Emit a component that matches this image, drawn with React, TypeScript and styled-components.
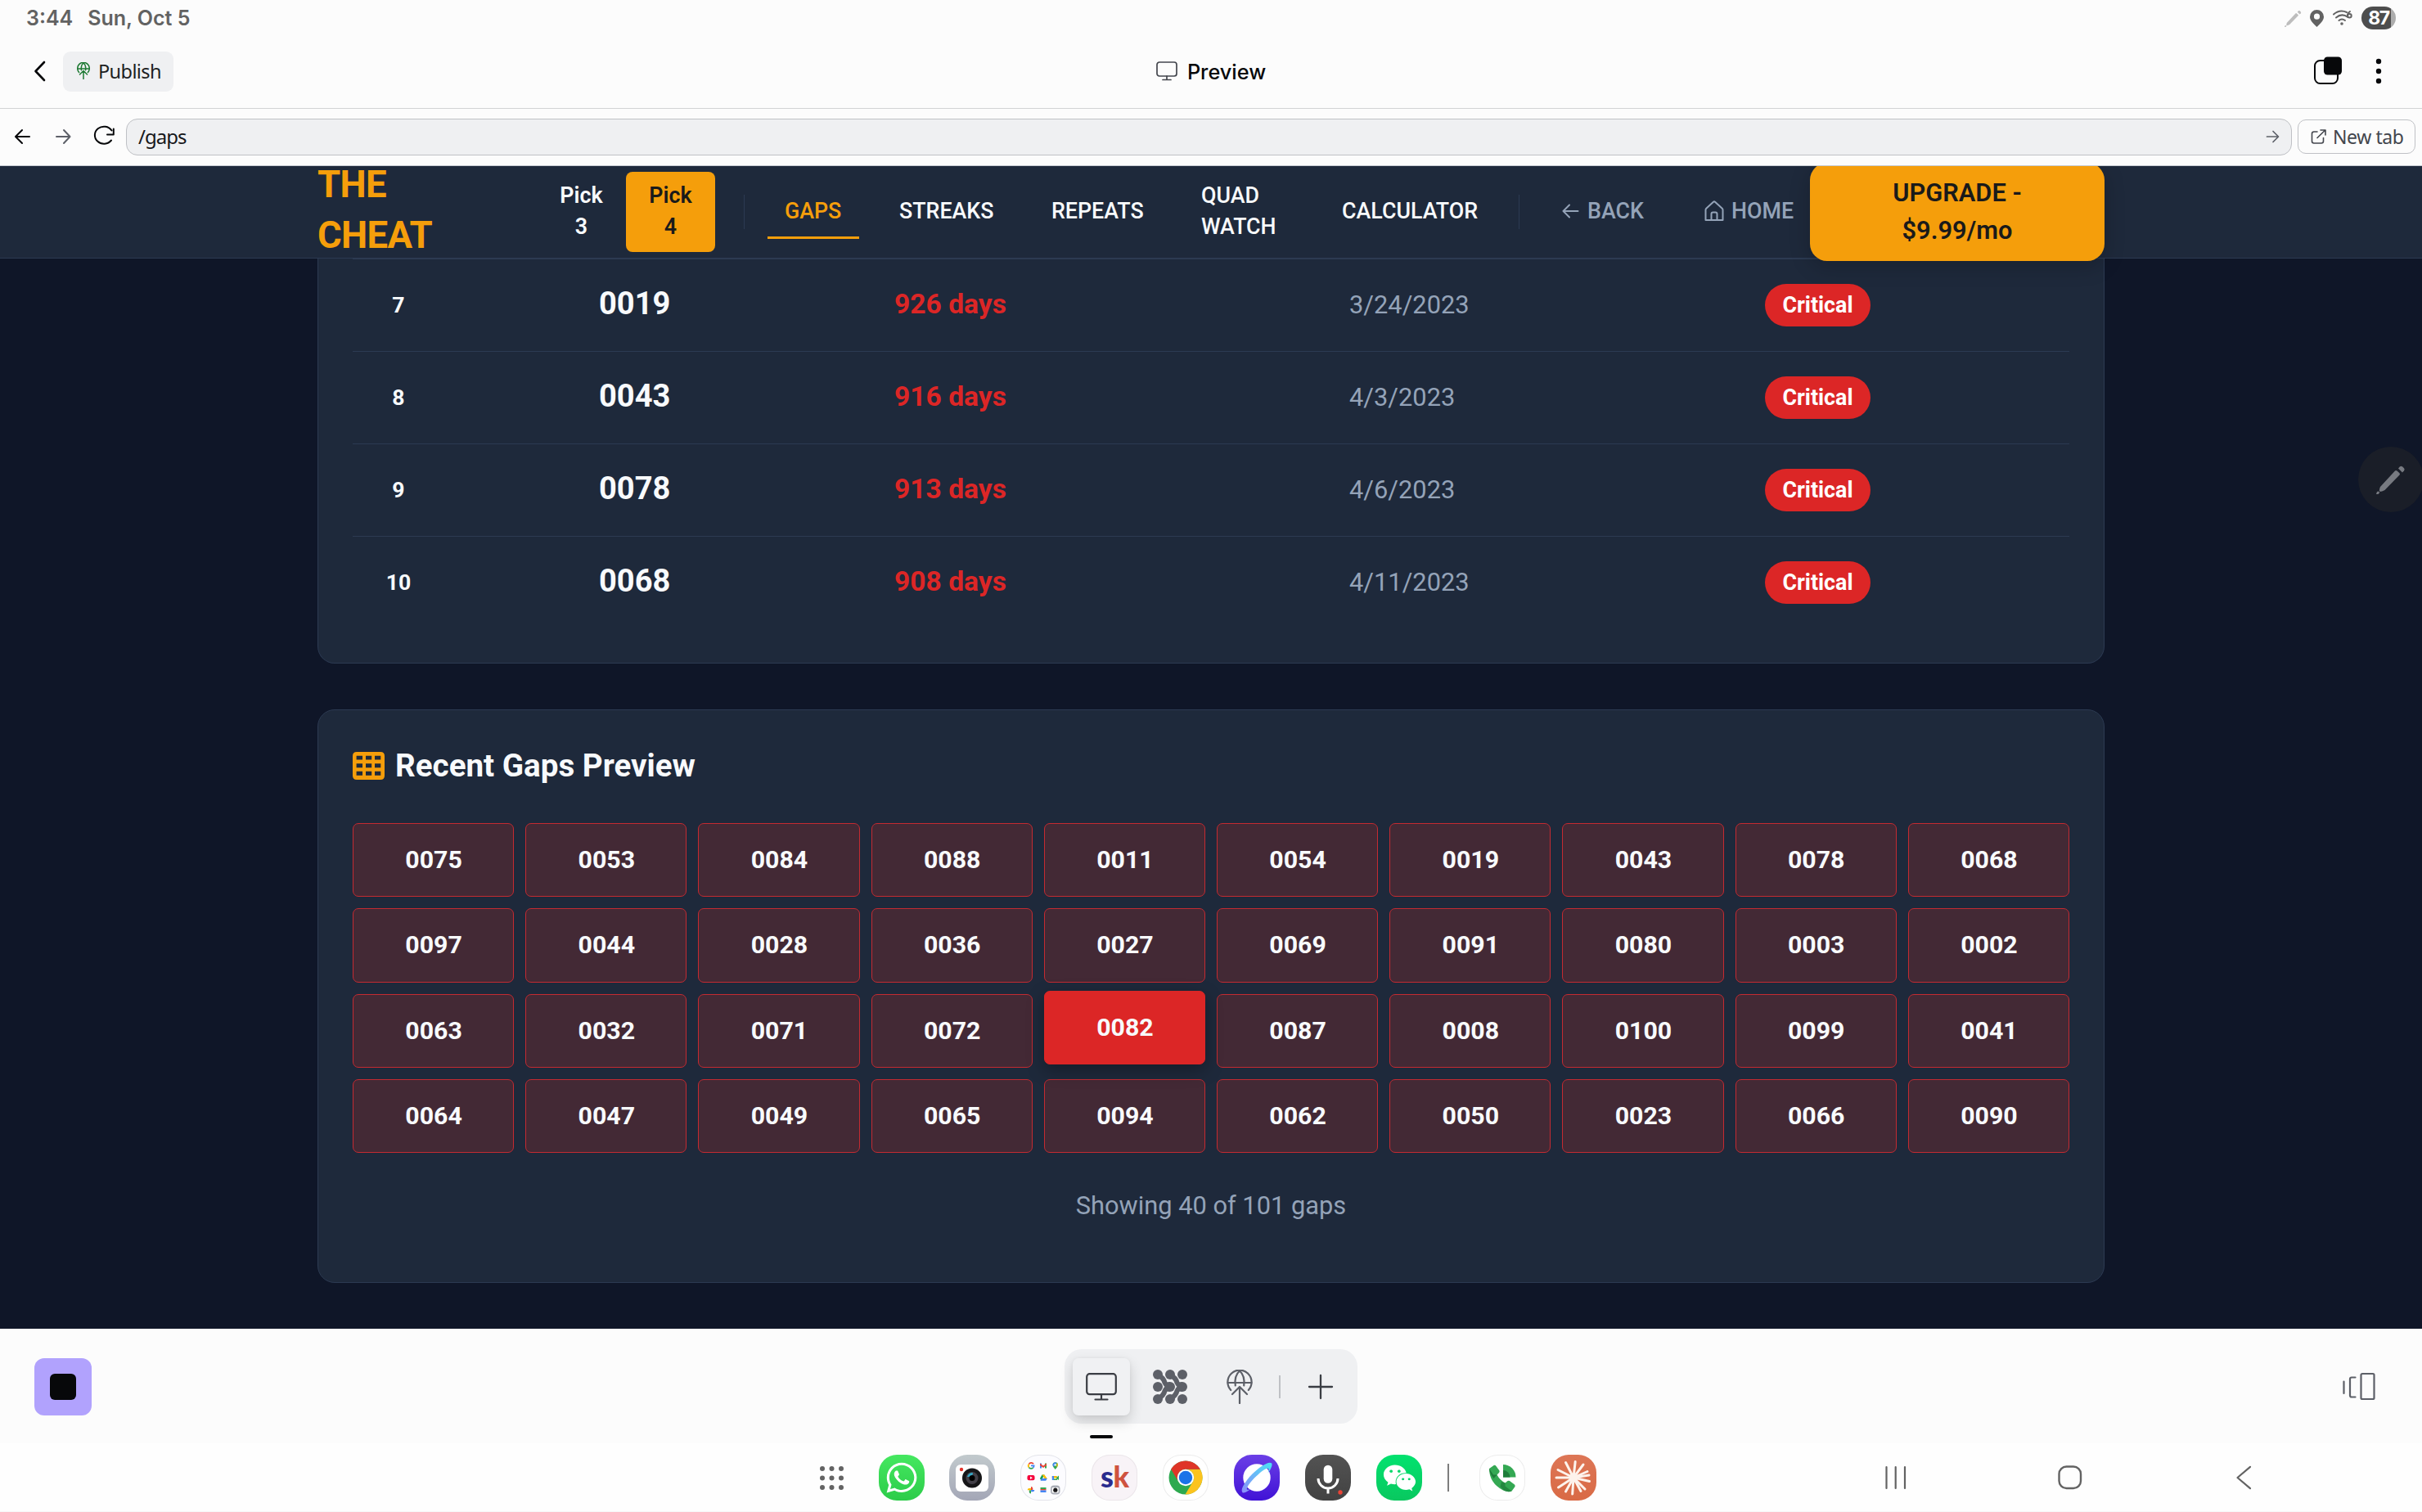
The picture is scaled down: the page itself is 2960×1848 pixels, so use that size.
import React from "react";
import styled, { createGlobalStyle } from "styled-components";
import { FaWhatsapp, FaWeixin } from "react-icons/fa";

const GlobalStyle = createGlobalStyle`
  *, *::before, *::after { box-sizing: border-box; }
  html, body { margin: 0; padding: 0; background: #fcfcfc; }
  body { font-family: Roboto, "Liberation Sans", sans-serif; }
`;

const ink = "#07080a";
const muted = "#94a3b8";
const amber = "#f59e0b";
const surface = "#1e293b";
const line = "#2c3a52";
const danger = "#dc2626";
const uiFont = `Inter, "Noto Sans", sans-serif`;

const Screen = styled.div`
  width: 2960px;
  height: 1848px;
  display: flex;
  flex-direction: column;
  overflow: hidden;
  background: #fcfcfc;
  position: relative;
`;

/* ---------- status bar ---------- */
const StatusBar = styled.div`
  height: 44px;
  flex: none;
  display: flex;
  align-items: center;
  justify-content: space-between;
  padding: 0 32px 0 32px;
  font-family: ${uiFont};
  font-weight: 600;
  font-size: 25px;
  color: #626262;
`;
const Clock = styled.div`
  display: flex;
  gap: 18px;
`;
const StatusIcons = styled.div`
  display: flex;
  align-items: center;
  height: 44px;
`;
const Battery = styled.div`
  width: 42px;
  height: 28px;
  margin-left: 11px;
  border-radius: 14px;
  background: linear-gradient(90deg, #4d4d4d 0 36px, #adadad 36px);
  color: #fff;
  font-size: 23px;
  font-weight: 700;
  letter-spacing: -1.5px;
  line-height: 28px;
  text-align: center;
`;

/* ---------- app bar ---------- */
const AppBar = styled.div`
  height: 89px;
  flex: none;
  display: grid;
  grid-template-columns: 1fr auto 1fr;
  align-items: center;
  padding: 0 40px 2px 40px;
  border-bottom: 1px solid #d2d3d5;
  font-family: ${uiFont};
`;
const BarSide = styled.div<{ $end?: boolean }>`
  display: flex;
  align-items: center;
  justify-content: ${(p) => (p.$end ? "flex-end" : "flex-start")};
`;
const PublishButton = styled.button`
  width: 135px;
  height: 49px;
  margin-left: 19px;
  padding: 0 0 1px 17px;
  border: 0;
  border-radius: 9px;
  background: #eff0f2;
  display: flex;
  align-items: center;
  gap: 10px;
  font-family: "Noto Sans", sans-serif;
  font-size: 23.5px;
  letter-spacing: -0.6px;
  color: #1d1f23;
`;
const BarTitle = styled.div`
  display: flex;
  align-items: center;
  gap: 12px;
  font-size: 25.3px;
  font-weight: 500;
  color: ${ink};
`;

/* ---------- address bar ---------- */
const AddressBar = styled.div`
  height: 70px;
  flex: none;
  display: flex;
  align-items: center;
  padding: 0 8px 1px 15px;
  border-bottom: 1px solid #c6cbd2;
  font-family: "Noto Sans", sans-serif;
`;
const BarIcons = styled.div`
  width: 139px;
  display: flex;
  align-items: center;
`;
const AddressField = styled.div`
  width: 2647px;
  height: 45px;
  border: 1px solid #bfc1c5;
  border-radius: 14px;
  background: #eff0f2;
  padding: 0 13px 1px 14px;
  display: flex;
  align-items: center;
  justify-content: space-between;
  font-size: 24px;
  letter-spacing: -1px;
  color: #17181b;
`;
const NewTabButton = styled.button`
  width: 144px;
  height: 42px;
  margin-left: 7px;
  padding: 0 0 1px 15px;
  border: 1px solid #bfc1c5;
  border-radius: 10px;
  background: #fcfcfc;
  display: flex;
  align-items: center;
  gap: 8px;
  font-family: "Noto Sans", sans-serif;
  font-size: 23px;
  letter-spacing: -0.4px;
  white-space: nowrap;
  color: #43464d;
`;

/* ---------- web page ---------- */
const Page = styled.div`
  height: 1421px;
  flex: none;
  overflow: hidden;
  background: #0f1628;
  color: #f8fafc;
  line-height: 1.5;
`;
const SiteHeader = styled.header`
  height: 113px;
  background: ${surface};
  border-bottom: 1px solid ${line};
  position: relative;
  z-index: 2;
`;
const SiteHeaderInner = styled.div`
  width: 2184px;
  height: 112px;
  margin: 0 auto;
  display: flex;
  align-items: center;
`;
const Brand = styled.div`
  width: 268px;
  padding-bottom: 4px;
  font-size: 45.5px;
  line-height: 62px;
  font-weight: 700;
  letter-spacing: -0.7px;
  color: ${amber};
`;
const PickButton = styled.div<{ $active?: boolean }>`
  width: 109px;
  height: 98px;
  padding: 10px 22px;
  border-radius: 8px;
  text-align: center;
  font-size: 26.8px;
  line-height: 38px;
  font-weight: 600;
  background: ${(p) => (p.$active ? amber : "transparent")};
  color: ${(p) => (p.$active ? "#1a1a1a" : "#f8fafc")};
`;
const HeaderRule = styled.div<{ $before: number }>`
  width: 1px;
  height: 42px;
  flex: none;
  margin: 0 28px 0 ${(p) => p.$before}px;
  background: ${line};
`;
const NavItem = styled.a<{ $w: number; $tone?: string; $active?: boolean; $gap?: number }>`
  width: ${(p) => p.$w}px;
  flex: none;
  margin-right: ${(p) => p.$gap ?? 28}px;
  padding: 13px 0 ${(p) => (p.$active ? 12 : 15)}px 21px;
  border-bottom: ${(p) => (p.$active ? `3px solid ${amber}` : "0")};
  display: flex;
  align-items: center;
  gap: 7px;
  font-size: 26.8px;
  line-height: 38px;
  font-weight: 500;
  color: ${(p) => p.$tone ?? "#f8fafc"};
`;
const UpgradeButton = styled.button`
  width: 360px;
  height: 120px;
  flex: none;
  border: 0;
  border-radius: 21px;
  padding: 0 60px;
  background: ${amber};
  color: #1a1a1a;
  font-family: inherit;
  font-size: 30.8px;
  line-height: 46px;
  font-weight: 600;
  box-shadow: 0 7px 26px rgba(0, 0, 0, 0.2);
`;
const Card = styled.section<{ $clipped?: boolean }>`
  width: 2184px;
  margin: 0 auto 56px;
  padding: ${(p) => (p.$clipped ? "0 42px 42px" : "42px")};
  border: 1px solid ${line};
  border-top-width: ${(p) => (p.$clipped ? 0 : 1)}px;
  border-radius: ${(p) => (p.$clipped ? "0 0 21px 21px" : "21px")};
  background: ${surface};
`;
const GapRow = styled.div`
  height: 113px;
  border-top: 1px solid ${line};
  display: grid;
  grid-template-columns: 301px 361px 556px 508px 1fr;
  align-items: center;
  justify-items: start;
`;
const Rank = styled.div`
  width: 112px;
  text-align: center;
  font-size: 26.6px;
  font-weight: 700;
`;
const GapNumber = styled.div`
  margin-top: -2px;
  font-size: 38.1px;
  font-weight: 700;
`;
const GapDays = styled.div`
  margin-top: -2px;
  font-size: 33.6px;
  font-weight: 700;
  color: ${danger};
`;
const GapDate = styled.div`
  font-size: 30.8px;
  color: ${muted};
`;
const Badge = styled.div`
  width: 129px;
  height: 52px;
  border-radius: 26px;
  background: ${danger};
  text-align: center;
  font-size: 26.8px;
  line-height: 52px;
  font-weight: 700;
  color: #fff;
`;
const CardTitle = styled.h2`
  margin: -4px 0 41px;
  height: 59px;
  display: flex;
  align-items: center;
  gap: 13px;
  font-size: 38.6px;
  font-weight: 700;
`;
const CellGrid = styled.div`
  display: grid;
  grid-template-columns: repeat(10, 1fr);
  gap: 14px;
`;
const Cell = styled.div<{ $hot?: boolean }>`
  height: 90.3px;
  border: 1px solid ${(p) => (p.$hot ? danger : "#c42a31")};
  border-radius: 7px;
  background: ${(p) => (p.$hot ? danger : "#432935")};
  transform: ${(p) => (p.$hot ? "translateY(-4px)" : "none")};
  box-shadow: ${(p) => (p.$hot ? "0 7px 21px rgba(0, 0, 0, 0.3)" : "none")};
  padding-left: 1px;
  text-align: center;
  font-size: 30.3px;
  line-height: 87px;
  font-weight: 700;
`;
const Caption = styled.p`
  margin: 42px 0 0;
  height: 74px;
  text-align: center;
  font-size: 30.8px;
  color: ${muted};
`;
const PenBubble = styled.div`
  position: absolute;
  left: 2882px;
  top: 546px;
  width: 80px;
  height: 80px;
  border-radius: 40px;
  background: #1a1e28;
  display: flex;
  align-items: center;
  justify-content: center;
`;

/* ---------- bottom bars ---------- */
const ToolBar = styled.div`
  height: 140px;
  flex: none;
  display: grid;
  grid-template-columns: 1fr auto 1fr;
  align-items: start;
  padding: 25px 42px 0;
`;
const StopButton = styled.div`
  width: 70px;
  height: 70px;
  margin-top: 11px;
  border-radius: 12px;
  background: #b1a2fd;
  display: flex;
  align-items: center;
  justify-content: center;
`;
const StopGlyph = styled.div`
  width: 32px;
  height: 32px;
  border-radius: 6px;
  background: #07080a;
`;
const TabPill = styled.div`
  width: 358px;
  height: 91px;
  border-radius: 21px;
  background: #eff0f2;
  display: flex;
  align-items: center;
  padding-left: 10px;
`;
const TabSlot = styled.div<{ $active?: boolean; $w?: number }>`
  width: ${(p) => p.$w ?? 70}px;
  height: 70px;
  flex: none;
  border-radius: 7px;
  background: ${(p) => (p.$active ? "#f0f1f3" : "transparent")};
  box-shadow: ${(p) => (p.$active ? "0 7px 16px rgba(0, 0, 0, 0.16), 0 0 4px rgba(0,0,0,0.05)" : "none")};
  display: flex;
  align-items: center;
  justify-content: center;
  position: relative;
`;
const TabMarker = styled.div`
  position: absolute;
  left: 21px;
  top: 94px;
  width: 28px;
  height: 4px;
  border-radius: 2px;
  background: #07080a;
`;
const TabRule = styled.div`
  width: 2px;
  height: 28px;
  flex: none;
  margin: 0 0 0 13px;
  background: #bfc1c5;
`;
const RightTool = styled.div`
  display: flex;
  justify-content: flex-end;
  padding: 28px 15px 0 0;
`;
const Dock = styled.div`
  height: 84px;
  flex: none;
  background: #fefefe;
  border-bottom: 1px solid #f7f7f7;
  display: flex;
  align-items: center;
  padding: 1px 0 0 1001px;
`;
const DockApps = styled.div<{ $before: number }>`
  display: flex;
  align-items: center;
  gap: 30.95px;
  margin-left: ${(p) => p.$before}px;
`;
const AppIcon = styled.div<{ $bg: string; $edge?: string }>`
  width: 56px;
  height: 56px;
  border-radius: 22px;
  background: ${(p) => p.$bg};
  box-shadow: inset 0 0 0 1px ${(p) => p.$edge ?? "transparent"};
  display: flex;
  align-items: center;
  justify-content: center;
`;
const SkWord = styled.div`
  font-family: Lato, sans-serif;
  font-weight: 900;
  font-size: 36px;
  line-height: 50px;
  letter-spacing: -0.5px;
  margin: -5px 0 0 0;
  color: #2a2c8e;
`;
const SkTail = styled.span`
  color: #cf5340;
`;
const DockRule = styled.div`
  width: 2px;
  height: 34px;
  margin-left: 31px;
  background: #7d7d7d;
`;
const SystemNav = styled.div`
  display: flex;
  align-items: center;
  margin-left: 353px;
`;

const Stroke: React.FC<{
  w: number;
  h: number;
  color: string;
  sw?: number;
  children: React.ReactNode;
}> = ({ w, h, color, sw = 2, children }) => (
  <svg
    width={w}
    height={h}
    viewBox={`0 0 ${w} ${h}`}
    fill="none"
    stroke={color}
    strokeWidth={sw}
    strokeLinecap="round"
    strokeLinejoin="round"
    style={{ flex: "none", display: "block", overflow: "visible" }}
  >
    {children}
  </svg>
);

const PenGlyph = ({ size, color }: { size: number; color: string }) => (
  <svg width={size} height={size} viewBox="0 0 36 36" fill={color}>
    <path d="M5 27 L23 7.5 Q24 6.500 25.500 7.500 L28.500 10.300 Q29.500 11.500 28.500 12.500 L10.500 31 Q8 32.500 5 33 L3.800 31.800 Q4 29 5 27Z" />
    <path d="M27 4.500 L29 2.300 Q30.500 1 32 2.300 L34 4.200 Q35.300 5.700 34 7.200 L32 9.500Z" />
    <path d="M1 33 L3 32.500 L4.300 34 L2.500 36 L0 36Z" />
  </svg>
);

const GlobeUp = ({ s, color, sw }: { s: number; color: string; sw: number }) => (
  <svg
    width={(s * 32) / 42}
    height={s}
    viewBox="0 0 32 42"
    fill="none"
    stroke={color}
    strokeWidth={sw}
    strokeLinecap="round"
    strokeLinejoin="round"
  >
    <path d="M5.200 25 A14.600 14.600 0 1 1 26.800 25" />
    <path d="M1.500 16 H30.500" />
    <path d="M10.800 19.500 C9.800 12 12 5 16 1.500 C20 5 22.200 12 21.200 19.500" />
    <path d="M16 41 V22 M7 30 L16 21 L25 30" />
  </svg>
);

const GridGlyph = () => (
  <svg width="39" height="34" viewBox="0 0 39 34" fill={amber}>
    <path
      fillRule="evenodd"
      d="M5 0H34Q39 0 39 5V29Q39 34 34 34H5Q0 34 0 29V5Q0 0 5 0Z
      M4.600 4.700H12V9.500H4.600Z M16 4.700H23.200V9.500H16Z M27 4.700H34.300V9.500H27Z
      M4.600 14.200H12V19.200H4.600Z M16 14.200H23.200V19.200H16Z M27 14.200H34.300V19.200H27Z
      M4.600 23.800H12V28.800H4.600Z M16 23.800H23.200V28.800H16Z M27 23.800H34.300V28.800H27Z"
    />
  </svg>
);

const Agents = () => (
  <svg width="42" height="42" viewBox="0 0 42 42" fill="#5d6068">
    {[6, 21, 36].map((y) =>
      [6, 21, 36].map((x) => <circle key={`${x}-${y}`} cx={x} cy={y} r="6" />)
    )}
    <path
      d="M7 7 Q13 10 14.500 16 Q17 21 21 21 Q17 21 14.500 26 Q13 32 7 35 M22 7 Q28 10 29.500 16 Q32 21 36 21 Q32 21 29.500 26 Q28 32 22 35"
      fill="none"
      stroke="#5d6068"
      strokeWidth="6"
    />
    <path d="M14 16 L21 15 V27 L14 26 Q16.500 21 14 16Z M29 16 L36 15 V27 L29 26 Q31.500 21 29 16Z" />
  </svg>
);

const WifiSix = () => (
  <Stroke w={24} h={20} color="#626262" sw={2}>
    <path d="M1 5.500 Q8.500 -1 17 3" />
    <path d="M4 9.500 Q11 3.500 18.500 9" />
    <path d="M7.500 13 Q11 10 15 13" />
    <circle cx="11" cy="17" r="0.800" />
    <path d="M21 2 Q17.800 4 18 7" />
    <circle cx="20.400" cy="7.200" r="2.300" />
  </Stroke>
);

const Camera = () => (
  <svg width="56" height="56" viewBox="0 0 56 56">
    <rect x="8" y="12" width="40" height="33" rx="6" fill="#fff" />
    <circle cx="15" cy="18" r="2.200" fill="#e3342c" />
    <circle cx="28" cy="28.500" r="12" fill="#161618" />
    <circle cx="28" cy="28.500" r="7.500" fill="#434048" />
    <path d="M22 27 A6.500 6.500 0 0 1 29 22 L28 27Z" fill="#35a6c4" />
    <circle cx="28" cy="28.500" r="3.500" fill="#000" />
  </svg>
);

const Folder = () => (
  <svg width="56" height="56" viewBox="0 0 56 56">
    <g fill="none" strokeWidth="1.800">
      <path d="M16 11.200 A3.300 3.300 0 0 0 10.500 11.500" stroke="#ea4335" />
      <path d="M10.500 11.500 A3.300 3.300 0 0 0 10.500 15.500" stroke="#fbbc05" />
      <path d="M10.500 15.500 A3.300 3.300 0 0 0 15.500 15.800" stroke="#34a853" />
      <path d="M13 13.400 H16.600 Q16.600 15 15.500 15.800" stroke="#4285f4" />
    </g>
    <path d="M24 10.500h2v6h-2z" fill="#4285f4" />
    <path d="M30 10.500h2v6h-2z" fill="#34a853" />
    <path d="M24 10.500l4 3 4-3v2.500l-4 3-4-3z" fill="#ea4335" />
    <path d="M39.500 12.500a3.200 3.200 0 0 1 6.400 0q0 2-3.200 5.500q-3.200-3.500-3.200-5.500z" fill="#34a853" />
    <path d="M39.500 12.500a3.200 3.200 0 0 1 5-2.600l-4 5z" fill="#4285f4" />
    <path d="M44.500 9.900a3.200 3.200 0 0 1 1.400 2.600q0 1-1.500 3z" fill="#fbbc05" />
    <circle cx="42.700" cy="12.400" r="1.200" fill="#fff" />
    <rect x="8.500" y="25" width="9" height="6.300" rx="2" fill="#f5003c" />
    <path d="M12 26.500l3 1.700-3 1.700z" fill="#fff" />
    <path d="M26.500 24.500h3l-4 7-1.600-2.500z" fill="#0f9d58" />
    <path d="M26.500 24.500h3l3.500 5h-3.200z" fill="#fbbc05" />
    <path d="M26 29h6.800l-1.600 2.700h-6.700z" fill="#4285f4" />
    <path d="M38.800 26h6v2.500h-6z" fill="#fbbc05" />
    <path d="M38.800 26h2.200v5h-2.200z" fill="#4285f4" />
    <path d="M41 29.500h4V31h-4z M44 28l3-2.500v5.500l-3-2z" fill="#34a853" />
    <path d="M13 39a2.200 2.200 0 0 1 2.200 2.200v2H13z" fill="#ea4335" />
    <path d="M17.300 43a2.200 2.200 0 0 1-2.200 2.200h-2V43z" fill="#4285f4" />
    <path d="M13 47.500a2.200 2.200 0 0 1-2.200-2.200v-2H13z" fill="#34a853" />
    <path d="M8.700 43.200a2.200 2.200 0 0 1 2.200-2.200H13v2.200z" fill="#fbbc05" />
    <path d="M24.500 40h7v2h-7z" fill="#34a853" />
    <path d="M24.500 42h7v1.500h-7z" fill="#ea4335" />
    <path d="M24.500 43.500h7V46h-7z" fill="#4285f4" />
    <rect x="37" y="37.500" width="11.500" height="11" rx="4" fill="#a9adb7" />
    <rect x="38.700" y="40" width="8" height="6.600" rx="1.300" fill="#fff" />
    <circle cx="42.800" cy="43.200" r="2.600" fill="#17171a" />
  </svg>
);

const Chrome = () => (
  <svg width="42" height="42" viewBox="0 0 42 42">
    <circle cx="21" cy="21" r="20.500" fill="#2da94f" />
    <path d="M21 10.800 H38.800 A20.500 20.500 0 0 1 20.500 41.500 L29.800 26.100 A10.200 10.200 0 0 0 21 10.800Z" fill="#fcc31e" />
    <path d="M21 10.800 A10.200 10.200 0 0 0 12.200 26.100 L3.250 10.750 A20.500 20.500 0 0 1 38.750 10.750 Z" fill="#df3527" />
    <circle cx="21" cy="21" r="10.200" fill="#fff" />
    <circle cx="21" cy="21" r="8.200" fill="#1a73e8" />
  </svg>
);

const Planet = () => (
  <svg width="56" height="56" viewBox="0 0 56 56">
    <defs>
      <linearGradient id="orbit" x1="0" y1="1" x2="1" y2="0">
        <stop offset="0" stopColor="#8c8dfa" />
        <stop offset="1" stopColor="#49e3f4" />
      </linearGradient>
    </defs>
    <circle cx="28" cy="28" r="16.700" fill="#fff" />
    <path
      d="M10.500 46.200 C7 42.500 15 31 22.500 23.500 C31 15 43 7 46.200 10.500 C47.500 13 44.500 19 41.500 22.500 C42.500 20 43 18 42 16.800 C39 15.500 30.500 23 26 27.500 C21 32.500 14.500 40.500 16 42.500 C17 43 18.500 42.800 20.500 42 C17 44.500 12.500 47.500 10.500 46.200Z"
      fill="url(#orbit)"
    />
  </svg>
);

const Mic = () => (
  <svg width="56" height="56" viewBox="0 0 56 56" fill="none">
    <rect x="22.700" y="12.700" width="10.600" height="22" rx="5.300" fill="#fff" />
    <path d="M16 29 A12 12 0 0 0 40 29 M28 41 V47.500" stroke="#fff" strokeWidth="3" />
    <circle cx="43" cy="46" r="2.700" fill="#ea4335" />
  </svg>
);

const Dialer = () => (
  <svg width="56" height="56" viewBox="0 0 56 56">
    <path
      d="M12 17 L18 12.800 Q19.500 12.500 20.500 14 L24.500 19.500 Q25 21 24 22 L21.500 24.500 Q25 31 31.500 34.500 L34.500 32 Q36 31.500 37 32 L43 36.500 Q44 37.500 43.500 39 L39.500 44.500 Q36 46.500 29 43.500 Q12 34.500 12 17Z"
      fill="#34a853"
    />
    <path d="M12 17 L17 24.500 L21.500 24.500 L17.500 29 Q12.500 23 12 17Z" fill="#1e7d3a" />
    <path d="M27 33 L31.500 34.500 L31.500 38.500 L39.500 44.500 Q35 46 30.500 44 L25.500 39Z" fill="#1e7d3a" opacity=".75" />
    <path d="M29 12 A15.500 15.500 0 0 1 44.500 27.500 H29Z" fill="#34a853" />
    <path d="M29 19 A8.500 8.500 0 0 1 37.500 27.500 H29Z" fill="#1e7d3a" />
  </svg>
);

const rays = [
  [18.5, 9.500], [30.2, 8.500], [40, 12], [45, 20.500], [47, 25], [47.5, 32.500],
  [42, 42], [37, 44.500], [26.700, 48], [18.500, 45], [9.500, 40], [7, 28], [9, 18.500],
];
const Burst = () => (
  <Stroke w={56} h={56} color="#fdf3ec" sw={3}>
    {rays.map(([x, y]) => (
      <path key={`${x}-${y}`} d={`M28 28 L${x} ${y}`} />
    ))}
    <circle cx="28" cy="28" r="4" fill="#fdf3ec" />
  </Stroke>
);

const gaps = [
  { rank: 7, number: "0019", days: "926 days", date: "3/24/2023" },
  { rank: 8, number: "0043", days: "916 days", date: "4/3/2023" },
  { rank: 9, number: "0078", days: "913 days", date: "4/6/2023" },
  { rank: 10, number: "0068", days: "908 days", date: "4/11/2023" },
];
const preview = (
  "0075 0053 0084 0088 0011 0054 0019 0043 0078 0068 " +
  "0097 0044 0028 0036 0027 0069 0091 0080 0003 0002 " +
  "0063 0032 0071 0072 0082 0087 0008 0100 0099 0041 " +
  "0064 0047 0049 0065 0094 0062 0050 0023 0066 0090"
).split(" ");

export default function App() {
  return (
    <Screen>
      <GlobalStyle />
      <StatusBar>
        <Clock>
          <span>3:44</span>
          <span>Sun, Oct 5</span>
        </Clock>
        <StatusIcons>
          <PenGlyph size={21} color="#bdbdbd" />
          <svg width="17" height="21" viewBox="0 0 17 21" style={{ marginLeft: 10, marginRight: 11 }}>
            <path
              fillRule="evenodd"
              fill="#626262"
              d="M8.500 0A8.500 8.500 0 0 1 17 8.500C17 13 12.500 17 8.500 21C4.500 17 0 13 0 8.500A8.500 8.500 0 0 1 8.500 0ZM8.500 4.600A3.600 3.600 0 1 0 8.500 11.800A3.600 3.600 0 1 0 8.500 4.600Z"
            />
          </svg>
          <WifiSix />
          <Battery>87</Battery>
        </StatusIcons>
      </StatusBar>

      <AppBar>
        <BarSide>
          <Stroke w={18} h={24} color={ink} sw={2.6}>
            <path d="M14 1 L3.500 12 L14 23" />
          </Stroke>
          <PublishButton>
            <GlobeUp s={21} color="#1f7a34" sw={3} />
            Publish
          </PublishButton>
        </BarSide>
        <BarTitle>
          <Stroke w={26} h={24} color="#43464d" sw={1.7}>
            <rect x="1" y="1" width="24" height="17" rx="3" />
            <path d="M13 18 V22.500 M8 22.500 H18" />
          </Stroke>
          Preview
        </BarTitle>
        <BarSide $end>
          <svg width="36" height="36" viewBox="0 0 36 36" style={{ marginRight: 40 }}>
            <rect x="2" y="5" width="28" height="28" rx="6.500" fill="none" stroke={ink} strokeWidth="2" />
            <rect x="13" y="0.500" width="22" height="22" rx="4.500" fill={ink} />
          </svg>
          <svg width="8" height="32" viewBox="0 0 8 32" fill={ink} style={{ marginRight: 9 }}>
            <circle cx="4" cy="4" r="3.200" />
            <circle cx="4" cy="16" r="3.200" />
            <circle cx="4" cy="28" r="3.200" />
          </svg>
        </BarSide>
      </AppBar>

      <AddressBar>
        <BarIcons>
          <Stroke w={24} h={24} color={ink}>
            <path d="M21 12 H4.500 M12 4 L4 12 L12 20" />
          </Stroke>
          <Stroke w={72} h={24} color="#5d6068">
            <path d="M30 12 H46 M39 4 L46.500 12 L39 20" />
          </Stroke>
          <Stroke w={30} h={24} color={ink}>
            <path d="M25.500 4.500 A11.200 10.500 0 1 0 25 16.500 M27.800 2.500 V9.500 H20" />
          </Stroke>
        </BarIcons>
        <AddressField>
          /gaps
          <Stroke w={18} h={16} color="#5d6068" sw={1.700}>
            <path d="M1.500 8 H15 M9 1.500 L15.500 8 L9 14.500" />
          </Stroke>
        </AddressField>
        <NewTabButton>
          <Stroke w={19} h={18} color="#43464d" sw={1.600}>
            <path d="M8 3 H4 Q1.500 3 1.500 5.500 V14.500 Q1.500 17 4 17 H13 Q15.500 17 15.500 14.500 V10.500 M8 10.500 L17.500 1.200 M12 1 H18 V7" />
          </Stroke>
          New tab
        </NewTabButton>
      </AddressBar>

      <Page>
        <SiteHeader>
          <SiteHeaderInner>
            <Brand>
              THE
              <br />
              CHEAT
            </Brand>
            <PickButton>Pick 3</PickButton>
            <PickButton $active>Pick 4</PickButton>
            <HeaderRule $before={35} />
            <NavItem $w={112} $tone={amber} $active>GAPS</NavItem>
            <NavItem $w={158}>STREAKS</NavItem>
            <NavItem $w={155}>REPEATS</NavItem>
            <NavItem $w={144}>
              QUAD
              <br />
              WATCH
            </NavItem>
            <NavItem $w={208} $gap={0}>CALCULATOR</NavItem>
            <HeaderRule $before={29} />
            <NavItem $w={147} $tone={muted}>
              <Stroke w={27} h={24} color={muted} sw={2}>
                <path d="M22.500 12 H5 M12 4.500 L4.500 12 L12 19.500" />
              </Stroke>
              BACK
            </NavItem>
            <NavItem $w={152} $tone={muted} $gap={0}>
              <Stroke w={28} h={28} color={muted} sw={2}>
                <path d="M3.500 25 V12.500 Q3.500 11.500 4.300 10.700 L13 2.800 Q14 2 15 2.800 L23.700 10.700 Q24.500 11.500 24.500 12.500 V25 Z M10.500 25 V17.500 Q10.500 15.500 12.500 15.500 H15.500 Q17.500 15.500 17.500 17.500 V25" />
              </Stroke>
              HOME
            </NavItem>
            <UpgradeButton>UPGRADE - $9.99/mo</UpgradeButton>
          </SiteHeaderInner>
        </SiteHeader>

        <Card $clipped>
          {gaps.map((g) => (
            <GapRow key={g.rank}>
              <Rank>{g.rank}</Rank>
              <GapNumber>{g.number}</GapNumber>
              <GapDays>{g.days}</GapDays>
              <GapDate>{g.date}</GapDate>
              <Badge>Critical</Badge>
            </GapRow>
          ))}
        </Card>

        <Card>
          <CardTitle>
            <GridGlyph />
            Recent Gaps Preview
          </CardTitle>
          <CellGrid>
            {preview.map((n) => (
              <Cell key={n} $hot={n === "0082"}>
                {n}
              </Cell>
            ))}
          </CellGrid>
          <Caption>Showing 40 of 101 gaps</Caption>
        </Card>
      </Page>

      <PenBubble>
        <PenGlyph size={36} color="#777a81" />
      </PenBubble>

      <ToolBar>
        <StopButton>
          <StopGlyph />
        </StopButton>
        <TabPill>
          <TabSlot $active>
            <Stroke w={38} h={34} color="#3a3d43" sw={2.2}>
              <rect x="1.200" y="1.200" width="35.600" height="25" rx="3.500" />
              <path d="M19 26.500 V32.500 M11.500 32.500 H26.500" />
            </Stroke>
            <TabMarker />
          </TabSlot>
          <TabSlot $w={98}>
            <Agents />
          </TabSlot>
          <TabSlot $w={71}>
            <GlobeUp s={42} color="#5d6068" sw={2.200} />
          </TabSlot>
          <TabRule />
          <TabSlot $w={98}>
            <Stroke w={30} h={30} color="#3a3d43" sw={2.300}>
              <path d="M15 1 V29 M1 15 H29" />
            </Stroke>
          </TabSlot>
        </TabPill>
        <RightTool>
          <Stroke w={40} h={35} color="#5d6068" sw={2.200}>
            <path d="M1.500 11.500 V26 M15.500 6.500 H11 Q9 6.500 9 8.500 V28.500 Q9 30.500 11 30.500 H15.500" />
            <rect x="22.500" y="2" width="16" height="31" rx="1.500" />
          </Stroke>
        </RightTool>
      </ToolBar>

      <Dock>
        <svg width="31" height="31" viewBox="0 0 31 31" fill="#636363">
          {[4, 15.500, 27].map((y) =>
            [4, 15.500, 27].map((x) => <circle key={`${x}-${y}`} cx={x} cy={y} r="3" />)
          )}
        </svg>
        <DockApps $before={41.5}>
          <AppIcon $bg="linear-gradient(#45e860, #2ccc49)">
            <FaWhatsapp size={42} color="#fff" />
          </AppIcon>
          <AppIcon $bg="linear-gradient(#c2cacd, #a3a6b6)">
            <Camera />
          </AppIcon>
          <AppIcon $bg="#fcfcff" $edge="#e3e4ea">
            <Folder />
          </AppIcon>
          <AppIcon $bg="#f8f3f7" $edge="#ebe6ea">
            <SkWord>
              s<SkTail>k</SkTail>
            </SkWord>
          </AppIcon>
          <AppIcon $bg="#fff" $edge="#ececec">
            <Chrome />
          </AppIcon>
          <AppIcon $bg="linear-gradient(#6b3fe6, #4012d6)">
            <Planet />
          </AppIcon>
          <AppIcon $bg="linear-gradient(#535353, #424242)">
            <Mic />
          </AppIcon>
          <AppIcon $bg="linear-gradient(#02e26f, #09c85f)">
            <FaWeixin size={41} color="#fff" />
          </AppIcon>
        </DockApps>
        <DockRule />
        <DockApps $before={36.5}>
          <AppIcon $bg="#fff" $edge="#ececec">
            <Dialer />
          </AppIcon>
          <AppIcon $bg="linear-gradient(#dd7656, #d96a45)">
            <Burst />
          </AppIcon>
        </DockApps>
        <SystemNav>
          <Stroke w={26} h={28} color="#636363" sw={2.200}>
            <path d="M1.500 1 V27 M12.700 1 V27 M24 1 V27" />
          </Stroke>
          <svg width="30" height="30" viewBox="0 0 30 30" style={{ margin: "0 188px 0 185px" }}>
            <rect x="1.500" y="1.500" width="26.500" height="26.500" rx="9" fill="none" stroke="#636363" strokeWidth="2.400" />
          </svg>
          <Stroke w={18} h={28} color="#636363" sw={2.200}>
            <path d="M17 0.800 L1.500 14 L17 27.200" />
          </Stroke>
        </SystemNav>
      </Dock>
    </Screen>
  );
}
